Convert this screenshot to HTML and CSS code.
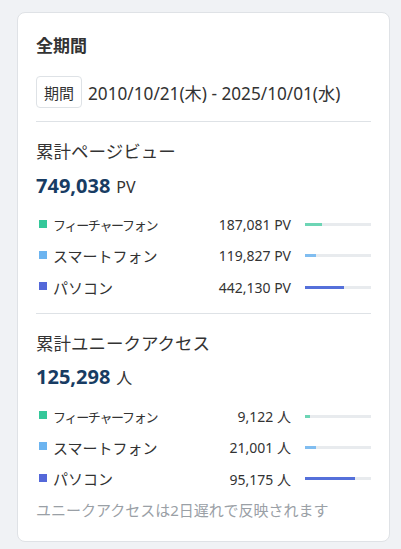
FILE: index.html
```html
<!DOCTYPE html>
<html lang="ja">
<head>
<meta charset="utf-8">
<link rel="stylesheet" href="styles.css">
</head>
<body>
<div class="card">
  <h2 class="title">全期間</h2>
  <div class="period">
    <span class="badge">期間</span>
    <span class="range">2010/10/21(木) - 2025/10/01(水)</span>
  </div>
  <hr class="divider">
  <section class="section">
    <h3 class="heading">累計ページビュー</h3>
    <div class="total"><span class="num">749,038</span><span class="unit">PV</span></div>
    <ul class="rows">
      <li class="row"><span class="label"><i class="dot green"></i><span class="small">フィーチャーフォン</span></span><span class="value">187,081 PV</span><span class="bar"><span class="fill green-bar" style="width:25%"></span></span></li>
      <li class="row"><span class="label"><i class="dot blue"></i>スマートフォン</span><span class="value">119,827 PV</span><span class="bar"><span class="fill blue-bar" style="width:16%"></span></span></li>
      <li class="row"><span class="label"><i class="dot indigo"></i>パソコン</span><span class="value">442,130 PV</span><span class="bar"><span class="fill indigo-bar" style="width:59%"></span></span></li>
    </ul>
  </section>
  <hr class="divider">
  <section class="section">
    <h3 class="heading">累計ユニークアクセス</h3>
    <div class="total"><span class="num">125,298</span><span class="unit">人</span></div>
    <ul class="rows">
      <li class="row"><span class="label"><i class="dot green"></i><span class="small">フィーチャーフォン</span></span><span class="value">9,122 人</span><span class="bar"><span class="fill green-bar" style="width:7.3%"></span></span></li>
      <li class="row"><span class="label"><i class="dot blue"></i>スマートフォン</span><span class="value">21,001 人</span><span class="bar"><span class="fill blue-bar" style="width:16.8%"></span></span></li>
      <li class="row"><span class="label"><i class="dot indigo"></i>パソコン</span><span class="value">95,175 人</span><span class="bar"><span class="fill indigo-bar" style="width:76%"></span></span></li>
    </ul>
    <p class="note">ユニークアクセスは2日遅れで反映されます</p>
  </section>
</div>
</body>
</html>
```
FILE: styles.css
```css
* { box-sizing: border-box; }
html, body { margin: 0; }
body {
  background: #f0f2f5;
  padding: 12px 11px 7px 17px;
  font-family: "Noto Sans", "Noto Sans CJK JP", sans-serif;
  color: #333;
}
.card {
  background: #fff;
  border: 1px solid #dfe2e6;
  border-radius: 8px;
  padding: 20px 18px 20px 18px;
  height: 530px;
}
.title {
  margin: 0;
  font-size: 17px;
  line-height: 26px;
  font-weight: 700;
  color: #333;
}
.period {
  display: flex;
  align-items: center;
  gap: 6px;
  margin-top: 17px;
}
.badge {
  display: inline-flex;
  align-items: center;
  justify-content: center;
  height: 32px;
  padding: 0 7px;
  border: 1px solid #dee2e6;
  border-radius: 4px;
  font-size: 15px;
}
.range { font-size: 17.2px; }
.divider {
  border: 0;
  border-top: 1px solid #dee2e6;
  margin: 13px 0 0;
}
.section + .divider { margin-top: 15px; }
.heading {
  margin: 16px 0 0;
  font-size: 17.5px;
  font-weight: 400;
  line-height: 26px;
}
.total {
  margin-top: 8.5px;
  display: flex;
  align-items: baseline;
  gap: 6px;
  line-height: 26px;
}
.num {
  font-size: 20px;
  font-weight: 700;
  color: #183c63;
}
.unit { font-size: 16px; }
.rows {
  list-style: none;
  margin: 14.5px 0 0;
  padding: 0;
  display: flex;
  flex-direction: column;
  gap: 10.3px;
}
.row {
  display: grid;
  grid-template-columns: 1fr auto 66px;
  column-gap: 14px;
  align-items: center;
  height: 21px;
}
.label {
  display: flex;
  align-items: center;
  font-size: 15px;
  padding-left: 3px;
}
.small { font-size: 13px; letter-spacing: -1.3px; }
.dot {
  width: 8px;
  height: 8px;
  margin-right: 6px;
  margin-top: -2px;
  flex: none;
}
.value { font-size: 14px; text-align: right; }
.bar {
  height: 3px;
  background: #e8ebee;
  display: flex;
}
.fill { height: 100%; }
.green { background: #34c89a; }
.blue { background: #6cb4f0; }
.indigo { background: #5468d9; }
.green-bar { background: #6dd5b5; }
.blue-bar { background: #80bdf0; }
.indigo-bar { background: #5570da; }
.note {
  margin: 10px 0 0;
  font-size: 15px;
  color: #9aa0a6;
}
```
